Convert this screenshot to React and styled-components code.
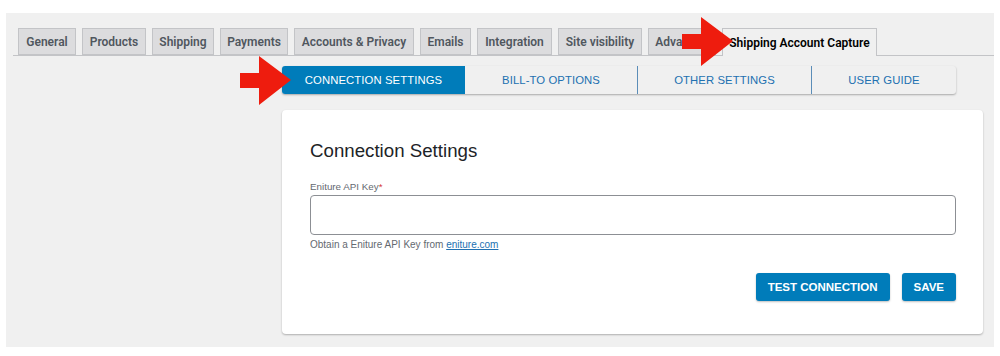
import React from 'react'
import styled, { createGlobalStyle } from 'styled-components'

const GlobalStyle = createGlobalStyle`
  body {
    margin: 0;
    background: #fff;
    font-family: "Liberation Sans", Arial, sans-serif;
  }
`

const topTabs = [
  { label: 'General', width: 58 },
  { label: 'Products', width: 64 },
  { label: 'Shipping', width: 62 },
  { label: 'Payments', width: 68 },
  { label: 'Accounts & Privacy', width: 120 },
  { label: 'Emails', width: 51 },
  { label: 'Integration', width: 75 },
  { label: 'Site visibility', width: 84 },
  { label: 'Advanced', width: 68 },
  { label: 'Shipping Account Capture', width: 155 },
]

const subTabs = [
  { label: 'CONNECTION SETTINGS', width: 183 },
  { label: 'BILL-TO OPTIONS', width: 172 },
  { label: 'OTHER SETTINGS', width: 174 },
  { label: 'USER GUIDE', width: 145 },
]

function Arrow({ x, y }) {
  return (
    <ArrowSvg $x={x} $y={y} width="52" height="50" viewBox="0 0 52 50">
      <polygon points="0,17 19,17 19,0 51,24 19,49 19,32 0,32" fill="#ee1c0e" />
    </ArrowSvg>
  )
}

export default function App() {
  const active = 'Shipping Account Capture'
  return (
    <>
      <GlobalStyle />
      <Screen>
        <TabBar>
          {topTabs.map((t) => (
            <NavTab key={t.label} $active={t.label === active} style={{ width: t.width }}>
              {t.label}
            </NavTab>
          ))}
        </TabBar>
        <Body>
          <Main>
            <SubTabs>
              {subTabs.map((s, i) => (
                <SubTab key={s.label} $active={i === 0} style={{ width: s.width }}>
                  {s.label}
                </SubTab>
              ))}
            </SubTabs>
            <Card>
              <Heading>Connection Settings</Heading>
              <Label>
                Eniture API Key<Req>*</Req>
              </Label>
              <Input type="text" />
              <Help>
                Obtain a Eniture API Key from <a href="#">eniture.com</a>
              </Help>
              <Actions>
                <Button>TEST CONNECTION</Button>
                <Button>SAVE</Button>
              </Actions>
            </Card>
          </Main>
        </Body>
        <Arrow x={234} y={43} />
        <Arrow x={676} y={4} />
      </Screen>
    </>
  )
}

const Screen = styled.div`
  position: relative;
  margin: 13px 6px 0 6px;
  height: 334px;
  background: #f0f0f0;
  padding-top: 15px;
  box-sizing: border-box;
`

const TabBar = styled.div`
  display: flex;
  gap: 6px;
  margin-left: 7px;
  padding-left: 5px;
  border-bottom: 1px solid #c3c4c7;
  height: 27px;
`

const NavTab = styled.div`
  box-sizing: border-box;
  height: ${(p) => (p.$active ? '28px' : '27px')};
  display: flex;
  align-items: center;
  justify-content: center;
  font-family: Roboto, "Liberation Sans", sans-serif;
  font-size: 12px;
  font-weight: 600;
  color: ${(p) => (p.$active ? '#000' : '#50575e')};
  background: ${(p) => (p.$active ? '#f0f0f0' : '#dcdcde')};
  border: 1px solid #c3c4c7;
  border-bottom: ${(p) => (p.$active ? 'none' : '1px solid #c3c4c7')};
  white-space: nowrap;
  padding-top: 1px;
`

const Body = styled.div`
  display: flex;
  padding-left: 276px;
`

const Main = styled.div`
  display: flex;
  flex-direction: column;
  width: 701px;
`

const SubTabs = styled.div`
  display: flex;
  margin-top: 10px;
  width: 674px;
  height: 28px;
  border-radius: 3px;
  background: #f0f0f0;
  box-shadow: 0 1px 2px rgba(0, 0, 0, 0.3);
  overflow: hidden;
`

const SubTab = styled.div`
  box-sizing: border-box;
  display: flex;
  align-items: center;
  justify-content: center;
  font-size: 11.3px;
  letter-spacing: 0.1px;
  font-weight: ${(p) => (p.$active ? 500 : 400)};
  color: ${(p) => (p.$active ? '#fff' : '#2271b1')};
  background: ${(p) => (p.$active ? '#007cba' : 'transparent')};
  & + & {
    border-left: 1px solid #5b8db8;
  }
  &:nth-child(2) {
    border-left: none;
  }
`

const Card = styled.div`
  margin-top: 16px;
  box-sizing: border-box;
  height: 224px;
  background: #fff;
  border-radius: 4px;
  box-shadow: 0 1px 2px rgba(0, 0, 0, 0.28);
  padding: 30px 27px 0 28px;
  display: flex;
  flex-direction: column;
`

const Heading = styled.h2`
  margin: 0;
  font-size: 18.7px;
  font-weight: 400;
  color: #1d2327;
  line-height: 22px;
`

const Label = styled.label`
  margin-top: 19px;
  font-size: 9.8px;
  color: #646970;
  line-height: 12px;
`

const Req = styled.span`
  color: #d63638;
`

const Input = styled.input`
  box-sizing: border-box;
  margin-top: 2px;
  height: 40px;
  width: 100%;
  border: 1px solid #8c8f94;
  border-radius: 4px;
  background: #fff;
`

const Help = styled.div`
  margin-top: 4px;
  font-size: 10px;
  color: #646970;
  line-height: 12px;
  a {
    color: #2271b1;
  }
`

const Actions = styled.div`
  display: flex;
  justify-content: flex-end;
  gap: 12px;
  margin-top: 22px;
`

const Button = styled.button`
  height: 28px;
  padding: 0 12px;
  border: none;
  border-radius: 3px;
  background: #007cba;
  color: #fff;
  font-family: inherit;
  font-size: 11.5px;
  font-weight: 700;
  box-shadow: 0 1px 2px rgba(0, 0, 0, 0.25);
`

const ArrowSvg = styled.svg`
  position: absolute;
  left: ${(p) => p.$x}px;
  top: ${(p) => p.$y}px;
`
